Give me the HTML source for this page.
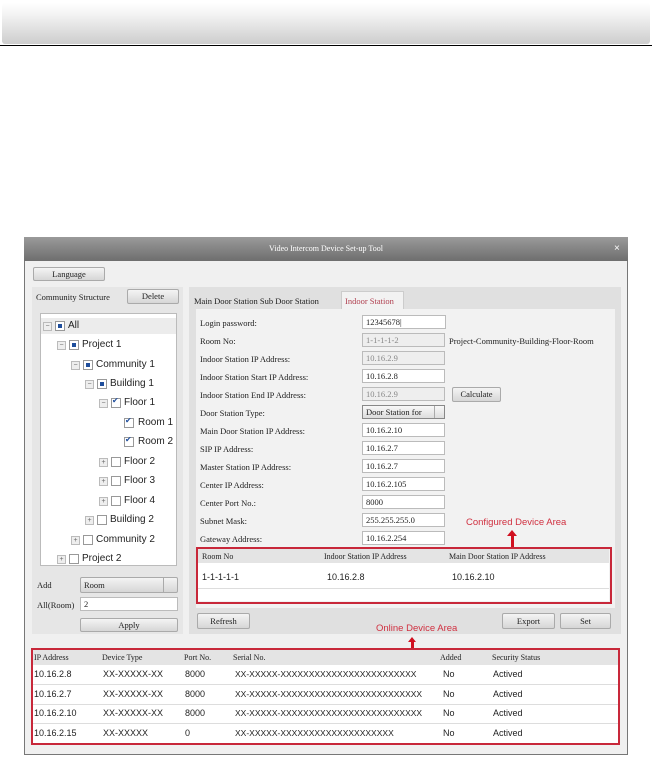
<!DOCTYPE html><html><head><style>
body{margin:0;width:652px;height:758px;background:#fff;position:relative;overflow:hidden;font-family:"Liberation Serif",serif;font-size:9px;color:#222}
.a{position:absolute}
.s{font-family:"Liberation Sans",sans-serif;font-size:9.5px;color:#222}
.btn{position:absolute;background:linear-gradient(#f4f4f4,#d6d6d6);border:1px solid #aaa;border-radius:2px;text-align:center;font-size:8.5px;box-sizing:border-box}
.inp{position:absolute;left:362px;width:83px;height:14px;background:#fff;border:1px solid #bbb;box-sizing:border-box;font-size:8.5px;padding-left:3px;line-height:12px}
.dis{background:#eee;color:#888}
.lab{position:absolute;left:200px;font-size:8.5px}
.pm{position:absolute;width:7px;height:7px;border:1px solid #bbb;background:#eee;font-size:7px;line-height:7px;text-align:center;color:#666;font-family:"Liberation Sans"}
.cb{position:absolute;width:8px;height:8px;border:1px solid #999;background:#fff}
.cb.f::after{content:"";position:absolute;left:2px;top:2px;width:4px;height:4px;background:#1f4e9c}
.cb.c::after{content:"✔";position:absolute;left:0;top:-3px;font-size:8px;color:#1f4e9c}
.tl{position:absolute;font-size:10px}
.red{position:absolute;border:2px solid #c8283a;box-sizing:border-box}
</style></head><body>
<div class="a" style="left:2px;top:3px;width:648px;height:41px;border-radius:3px;background:linear-gradient(#fff,#f2f2f2 30%,#cdcdcd)"></div>
<div class="a" style="left:0;top:45px;width:652px;height:1px;background:#000"></div>

<div class="a" style="left:24px;top:237px;width:604px;height:518px;background:#f0f0f0;border:1px solid #777;box-sizing:border-box"></div>
<div class="a" style="left:24px;top:237px;width:604px;height:24px;background:linear-gradient(#9a9a9a,#6e6e6e);color:#fff;text-align:center;line-height:24px;font-size:8px">Video Intercom Device Set-up Tool</div>
<div class="a" style="left:614px;top:243px;color:#fff;font-size:10px;font-family:'Liberation Sans'">×</div>

<div class="btn" style="left:33px;top:267px;width:72px;height:14px;line-height:12px">Language</div>
<div class="a" style="left:32px;top:287px;width:151px;height:347px;background:#e6e6e6"></div>
<div class="a" style="left:36px;top:292px;font-size:8.5px">Community Structure</div>
<div class="btn" style="left:127px;top:289px;width:52px;height:15px;line-height:13px">Delete</div>
<div class="a" style="left:40px;top:313px;width:137px;height:253px;background:#fff;border:1px solid #bbb;box-sizing:border-box"></div>
<div class="a" style="left:41px;top:318px;width:135px;height:16px;background:#ececec"></div>

<div class="pm" style="left:43px;top:322px">−</div><div class="cb f" style="left:55px;top:321px"></div><div class="tl s" style="left:68px;top:320px">All</div>
<div class="pm" style="left:57px;top:341px">−</div><div class="cb f" style="left:69px;top:340px"></div><div class="tl s" style="left:82px;top:339px">Project 1</div>
<div class="pm" style="left:71px;top:361px">−</div><div class="cb f" style="left:83px;top:360px"></div><div class="tl s" style="left:96px;top:359px">Community 1</div>
<div class="pm" style="left:85px;top:380px">−</div><div class="cb f" style="left:97px;top:379px"></div><div class="tl s" style="left:110px;top:378px">Building 1</div>
<div class="pm" style="left:99px;top:399px">−</div><div class="cb c" style="left:111px;top:398px"></div><div class="tl s" style="left:124px;top:397px">Floor 1</div>
<div class="cb c" style="left:124px;top:418px"></div><div class="tl s" style="left:138px;top:417px">Room 1</div>
<div class="cb c" style="left:124px;top:437px"></div><div class="tl s" style="left:138px;top:436px">Room 2</div>
<div class="pm" style="left:99px;top:458px">+</div><div class="cb" style="left:111px;top:457px"></div><div class="tl s" style="left:124px;top:456px">Floor 2</div>
<div class="pm" style="left:99px;top:477px">+</div><div class="cb" style="left:111px;top:476px"></div><div class="tl s" style="left:124px;top:475px">Floor 3</div>
<div class="pm" style="left:99px;top:497px">+</div><div class="cb" style="left:111px;top:496px"></div><div class="tl s" style="left:124px;top:495px">Floor 4</div>
<div class="pm" style="left:85px;top:516px">+</div><div class="cb" style="left:97px;top:515px"></div><div class="tl s" style="left:110px;top:514px">Building 2</div>
<div class="pm" style="left:71px;top:536px">+</div><div class="cb" style="left:83px;top:535px"></div><div class="tl s" style="left:96px;top:534px">Community 2</div>
<div class="pm" style="left:57px;top:555px">+</div><div class="cb" style="left:69px;top:554px"></div><div class="tl s" style="left:82px;top:553px">Project 2</div>

<div class="a" style="left:37px;top:580px;font-size:8.5px">Add</div>
<div class="btn" style="left:80px;top:577px;width:98px;height:16px;line-height:14px;text-align:left;padding-left:3px">Room</div>
<div class="a" style="left:163px;top:578px;width:1px;height:14px;background:#aaa"></div>
<div class="a" style="left:37px;top:600px;font-size:8.5px">All(Room)</div>
<div class="a" style="left:80px;top:597px;width:98px;height:14px;background:#fff;border:1px solid #bbb;box-sizing:border-box;font-size:8.5px;padding-left:3px;line-height:12px">2</div>
<div class="btn" style="left:80px;top:618px;width:98px;height:14px;line-height:12px">Apply</div>

<div class="a" style="left:189px;top:287px;width:432px;height:347px;background:#e0e0e0"></div>
<div class="a" style="left:194px;top:296px;font-size:8.5px">Main Door Station Sub Door Station</div>
<div class="a" style="left:341px;top:291px;width:63px;height:18px;background:#f2f2f2;border:1px solid #ccc;border-bottom:none;box-sizing:border-box;color:#b04050;font-size:8.5px;padding:4px 0 0 3px">Indoor Station</div>
<div class="a" style="left:196px;top:309px;width:419px;height:299px;background:#f2f2f2"></div>

<div class="lab" style="top:318px">Login password:</div><div class="inp" style="top:315px;width:84px">12345678|</div>
<div class="lab" style="top:336px">Room No:</div><div class="inp dis" style="top:333px">1-1-1-1-2</div>
<div class="a" style="left:449px;top:336px;font-size:8.5px">Project-Community-Building-Floor-Room</div>
<div class="lab" style="top:354px">Indoor Station IP Address:</div><div class="inp dis" style="top:351px">10.16.2.9</div>
<div class="lab" style="top:372px">Indoor Station Start IP Address:</div><div class="inp" style="top:369px">10.16.2.8</div>
<div class="lab" style="top:390px">Indoor Station End IP Address:</div><div class="inp dis" style="top:387px">10.16.2.9</div>
<div class="btn" style="left:452px;top:387px;width:49px;height:15px;line-height:13px">Calculate</div>
<div class="lab" style="top:408px">Door Station Type:</div><div class="inp" style="top:405px;background:linear-gradient(#f8f8f8,#ddd);border-color:#888">Door Station for</div>
<div class="a" style="left:434px;top:406px;width:1px;height:12px;background:#aaa"></div>
<div class="lab" style="top:426px">Main Door Station IP Address:</div><div class="inp" style="top:423px">10.16.2.10</div>
<div class="lab" style="top:444px">SIP IP Address:</div><div class="inp" style="top:441px">10.16.2.7</div>
<div class="lab" style="top:462px">Master Station IP Address:</div><div class="inp" style="top:459px">10.16.2.7</div>
<div class="lab" style="top:480px">Center IP Address:</div><div class="inp" style="top:477px">10.16.2.105</div>
<div class="lab" style="top:498px">Center Port No.:</div><div class="inp" style="top:495px">8000</div>
<div class="lab" style="top:516px">Subnet Mask:</div><div class="inp" style="top:513px">255.255.255.0</div>
<div class="lab" style="top:534px">Gateway Address:</div><div class="inp" style="top:531px">10.16.2.254</div>

<div class="a s" style="left:466px;top:517px;color:#d03040;font-size:9.5px">Configured Device Area</div>
<div class="a" style="left:511px;top:535px;width:3px;height:12px;background:#d01020"></div>
<div class="a" style="left:507px;top:530px;width:0;height:0;border-left:5px solid transparent;border-right:5px solid transparent;border-bottom:6px solid #d01020"></div>

<div class="a" style="left:198px;top:549px;width:411px;height:52px;background:#fff"></div>
<div class="a" style="left:198px;top:549px;width:411px;height:14px;background:#e4e4e4"></div>
<div class="a" style="left:202px;top:552px;font-size:8px">Room No</div>
<div class="a" style="left:324px;top:552px;font-size:8px">Indoor Station IP Address</div>
<div class="a" style="left:449px;top:552px;font-size:8px">Main Door Station IP Address</div>
<div class="a s" style="left:202px;top:572px;font-size:9px">1-1-1-1-1</div>
<div class="a s" style="left:327px;top:572px;font-size:9px">10.16.2.8</div>
<div class="a s" style="left:452px;top:572px;font-size:9px">10.16.2.10</div>
<div class="a" style="left:198px;top:588px;width:411px;height:1px;background:#ddd"></div>
<div class="red" style="left:196px;top:547px;width:416px;height:57px"></div>

<div class="btn" style="left:197px;top:613px;width:53px;height:16px;line-height:14px">Refresh</div>
<div class="btn" style="left:502px;top:613px;width:53px;height:16px;line-height:14px">Export</div>
<div class="btn" style="left:560px;top:613px;width:51px;height:16px;line-height:14px">Set</div>

<div class="a s" style="left:376px;top:623px;color:#d03040;font-size:9.5px">Online Device Area</div>
<div class="a" style="left:411px;top:642px;width:3px;height:7px;background:#d01020"></div>
<div class="a" style="left:408px;top:637px;width:0;height:0;border-left:4px solid transparent;border-right:4px solid transparent;border-bottom:5px solid #d01020"></div>

<div class="a" style="left:32px;top:649px;width:586px;height:95px;background:#fff"></div>
<div class="a" style="left:32px;top:649px;width:586px;height:16px;background:#e4e4e4"></div>
<div class="a" style="left:34px;top:653px;font-size:8px">IP Address</div>
<div class="a" style="left:102px;top:653px;font-size:8px">Device Type</div>
<div class="a" style="left:184px;top:653px;font-size:8px">Port No.</div>
<div class="a" style="left:233px;top:653px;font-size:8px">Serial No.</div>
<div class="a" style="left:440px;top:653px;font-size:8px">Added</div>
<div class="a" style="left:492px;top:653px;font-size:8px">Security Status</div>
<div class="a s" style="left:34px;top:665px;font-size:9px;line-height:19.5px">10.16.2.8<br>10.16.2.7<br>10.16.2.10<br>10.16.2.15</div>
<div class="a s" style="left:103px;top:665px;font-size:9px;line-height:19.5px">XX-XXXXX-XX<br>XX-XXXXX-XX<br>XX-XXXXX-XX<br>XX-XXXXX</div>
<div class="a s" style="left:185px;top:665px;font-size:9px;line-height:19.5px">8000<br>8000<br>8000<br>0</div>
<div class="a s" style="left:235px;top:665px;font-size:8.5px;line-height:19.5px">XX-XXXXX-XXXXXXXXXXXXXXXXXXXXXXXX<br>XX-XXXXX-XXXXXXXXXXXXXXXXXXXXXXXXX<br>XX-XXXXX-XXXXXXXXXXXXXXXXXXXXXXXXX<br>XX-XXXXX-XXXXXXXXXXXXXXXXXXXX</div>
<div class="a s" style="left:443px;top:665px;font-size:9px;line-height:19.5px">No<br>No<br>No<br>No</div>
<div class="a s" style="left:493px;top:665px;font-size:9px;line-height:19.5px">Actived<br>Actived<br>Actived<br>Actived</div>
<div class="a" style="left:32px;top:684px;width:586px;height:1px;background:#ddd"></div>
<div class="a" style="left:32px;top:704px;width:586px;height:1px;background:#ddd"></div>
<div class="a" style="left:32px;top:723px;width:586px;height:1px;background:#ddd"></div>
<div class="red" style="left:31px;top:648px;width:589px;height:97px"></div>
</body></html>
